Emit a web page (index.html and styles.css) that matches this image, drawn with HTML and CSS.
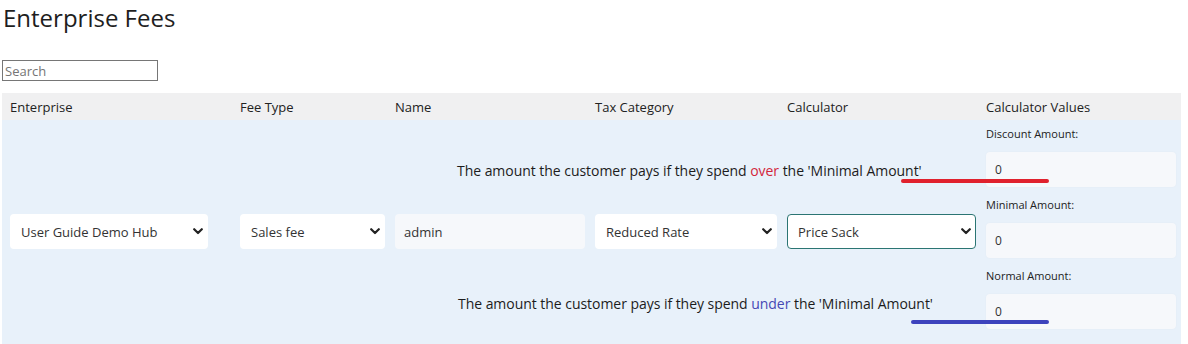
FILE: index.html
```html
<!DOCTYPE html>
<html lang="en">
<head>
    <meta charset="UTF-8">
    <meta name="viewport" content="width=device-width, initial-scale=1.0">
    <title>Enterprise Fees</title>
    <link rel="stylesheet" href="styles.css">
</head>
<body>
    <div class="page">
        <h1>Enterprise Fees</h1>

        <input class="search" type="text" placeholder="Search">

        <div class="fees">
            <div class="grid head">
                <div>Enterprise</div>
                <div>Fee Type</div>
                <div>Name</div>
                <div>Tax Category</div>
                <div>Calculator</div>
                <div>Calculator Values</div>
            </div>

            <div class="grid fee-row">
                <div class="select cell w-enterprise">
                    <span>User Guide Demo Hub</span>
                    <svg class="chevron" viewBox="0 0 10 7"><path d="M1.2 1.2 L5 5 L8.8 1.2"/></svg>
                </div>
                <div class="select cell w-type">
                    <span>Sales fee</span>
                    <svg class="chevron" viewBox="0 0 10 7"><path d="M1.2 1.2 L5 5 L8.8 1.2"/></svg>
                </div>
                <div class="field cell w-name">admin</div>
                <div class="select cell w-tax">
                    <span>Reduced Rate</span>
                    <svg class="chevron" viewBox="0 0 10 7"><path d="M1.2 1.2 L5 5 L8.8 1.2"/></svg>
                </div>
                <div class="select cell w-calc focused">
                    <span>Price Sack</span>
                    <svg class="chevron" viewBox="0 0 10 7"><path d="M1.2 1.2 L5 5 L8.8 1.2"/></svg>
                </div>
                <div class="values">
                    <label>Discount Amount:</label>
                    <div class="field value">0</div>
                    <label>Minimal Amount:</label>
                    <div class="field value">0</div>
                    <label>Normal Amount:</label>
                    <div class="field value">0</div>
                </div>

                <!-- annotations drawn over the row -->
                <p class="note note-over">The amount the customer pays if they spend <span class="over">over</span> the 'Minimal Amount'</p>
                <span class="mark mark-over"></span>
                <p class="note note-under">The amount the customer pays if they spend <span class="under">under</span> the 'Minimal Amount'</p>
                <span class="mark mark-under"></span>
            </div>
        </div>
    </div>
</body>
</html>
```

FILE: styles.css
```css
* {
    box-sizing: border-box;
}

body {
    margin: 0;
    font-family: "Open Sans", "Noto Sans", sans-serif;
    color: #222;
    background: #fff;
}

.page {
    padding-left: 2px;
    width: 1181px;
}

h1 {
    margin: 3px 0 0 1px;
    font-size: 24px;
    line-height: 29px;
    font-weight: 500;
    color: #1e1e1e;
}

.search {
    display: block;
    margin-top: 28px;
    width: 156px;
    height: 21px;
    padding: 0 2px;
    border: 1px solid #767676;
    border-radius: 0;
    font-family: inherit;
    font-size: 13px;
    outline: none;
}

.search::placeholder {
    color: #757575;
}

.fees {
    margin-top: 12px;
}

.grid {
    display: grid;
    grid-template-columns: 230px 155px 200px 192px 199px 1fr;
    padding-left: 8px;
}

.head {
    height: 27px;
    align-items: center;
    background: #f0f0f1;
    font-size: 13px;
    color: #222;
}

.fee-row {
    position: relative;
    align-items: center;
    padding: 5px 0 15px 8px;
    background: #e8f1fa;
}

/* the inputs sit a little below the middle of the row */
.cell {
    margin-top: 9px;
}

/* Select boxes */
.select {
    display: flex;
    align-items: center;
    justify-content: space-between;
    height: 35px;
    padding: 0 5px 0 11px;
    background: #fff;
    border-radius: 4px;
    font-size: 13px;
    color: #333;
}

.chevron {
    width: 10px;
    height: 7px;
    fill: none;
    stroke: #222;
    stroke-width: 2.2;
    stroke-linecap: round;
    stroke-linejoin: round;
}

.focused {
    border: 1px solid #2b7573;
    padding-left: 10px;
    padding-right: 4px;
}

.w-enterprise { width: 198px; }
.w-type { width: 145px; }
.w-name { width: 190px; }
.w-tax { width: 182px; }
.w-calc { width: 189px; }

.field {
    display: flex;
    align-items: center;
    height: 35px;
    padding: 0 9px;
    background: #f6f8fb;
    border-radius: 4px;
    font-size: 13px;
    color: #333;
}

/* Calculator values column */
.values {
    display: flex;
    flex-direction: column;
}

.values label {
    font-size: 11px;
    line-height: 18px;
    margin-bottom: 9px;
    color: #222;
}

.value {
    width: 190px;
    margin-bottom: 9px;
    font-size: 12px;
    box-shadow: 0 0 2px rgba(0, 0, 0, 0.04);
}

.value:last-child {
    margin-bottom: 0;
}

/* Annotations */
.note {
    position: absolute;
    margin: 0;
    font-size: 14px;
    line-height: 20px;
    color: #1c1c1c;
    white-space: nowrap;
    letter-spacing: -0.04px;
}

.note-over {
    left: 455px;
    top: 41px;
}

.note-under {
    left: 456px;
    top: 174px;
}

.over { color: #d3263a; }
.under { color: #4548b4; }

.mark {
    position: absolute;
    height: 4px;
    border-radius: 2px;
}

.mark-over {
    left: 899px;
    top: 59px;
    width: 148px;
    background: #e0212d;
}

.mark-under {
    left: 909px;
    top: 200px;
    width: 138px;
    background: #3d43bd;
}
```
